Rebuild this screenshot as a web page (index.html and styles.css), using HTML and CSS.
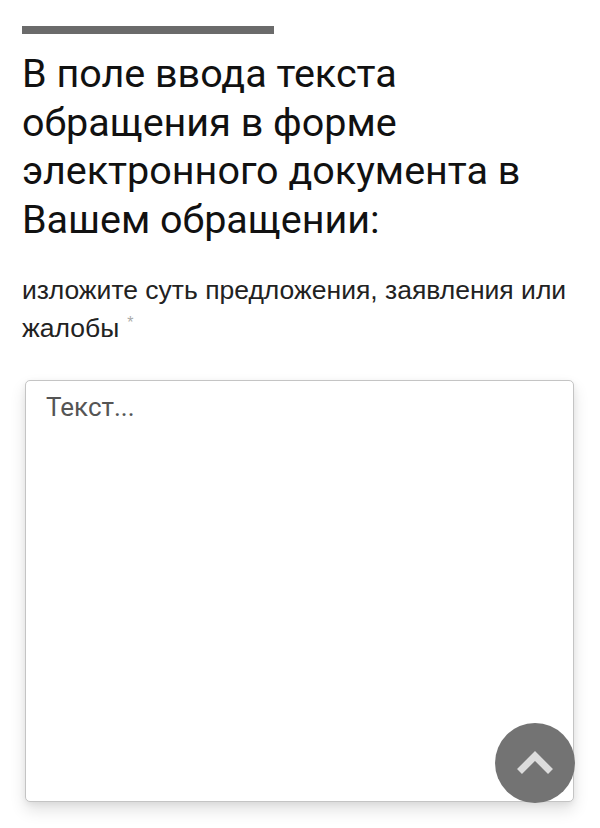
FILE: index.html
```html
<!DOCTYPE html>
<html lang="ru">
<head>
<meta charset="utf-8">
<link rel="stylesheet" href="styles.css">
</head>
<body>
<main class="page">
  <div class="rule"></div>
  <h1 class="title">В поле ввода текста обращения в форме электронного документа в Вашем обращении:</h1>
  <p class="label">изложите суть предложения, заявления или <span class="last">жалобы</span><span class="req">*</span></p>
  <div class="field">
    <textarea class="input" placeholder="Текст..."></textarea>
  </div>
</main>
<button class="totop" aria-label="Наверх">
  <svg width="40" height="40" viewBox="0 0 40 40"><path d="M4.5 28.5 L20 13 L35.5 28.5" fill="none" stroke="#dcdcdc" stroke-width="7" stroke-linecap="butt" stroke-linejoin="miter"/></svg>
</button>
</body>
</html>
```
FILE: styles.css
```css
html, body { margin: 0; padding: 0; background: #fff; }
body { width: 600px; height: 828px; overflow: hidden; position: relative; }
.page { padding: 26px 26px 0 22px; }
.rule { width: 252px; height: 8px; background: #6b6b6b; }
.title {
  margin: 16px 0 0 0;
  font-family: Roboto, "Noto Sans", sans-serif;
  font-weight: 400;
  font-size: 39.5px;
  line-height: 48.5px;
  color: #111;
}
.label {
  margin: 27px 0 0 0;
  font-family: "Liberation Sans", Arial, sans-serif;
  font-size: 26.5px;
  line-height: 38px;
  color: #222;
}
.last { white-space: nowrap; }
.req {
  display: inline-block;
  color: #aaa;
  font-size: 16px;
  line-height: 16px;
  vertical-align: top;
  margin: 6px 0 0 8px;
}
.field { margin: 33px 0 0 3px; }
.input {
  display: block;
  box-sizing: border-box;
  width: 549px;
  height: 422px;
  border: 1px solid #c4c4c4;
  border-radius: 5px;
  box-shadow: 0 8px 16px rgba(0,0,0,0.12), 0 2px 6px rgba(0,0,0,0.06);
  padding: 11px 20px;
  font-family: Roboto, "Noto Sans", sans-serif;
  font-size: 26px;
  color: #333;
  resize: none;
  outline: none;
  background: #fff;
}
.input::placeholder { color: #555; }
.totop {
  position: absolute;
  left: 495px;
  top: 723px;
  width: 80px;
  height: 80px;
  border-radius: 50%;
  border: none;
  background: #737373;
  padding: 0;
  display: flex;
  align-items: center;
  justify-content: center;
}
```
